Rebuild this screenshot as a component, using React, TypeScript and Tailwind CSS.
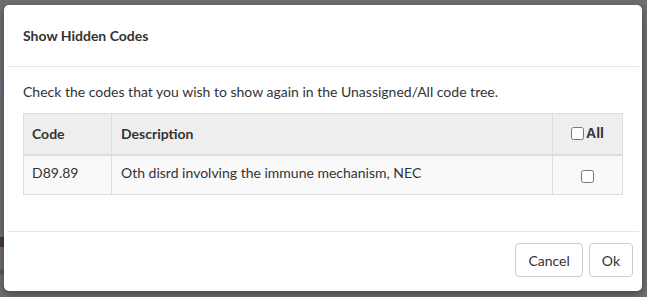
const FONT = { fontFamily: "Lato, 'Open Sans', sans-serif" };

const ROWS = [
  { code: "D89.89", description: "Oth disrd involving the immune mechanism, NEC" },
];

export default function App() {
  return (
    <div className="w-[647px] h-[297px] bg-[#6f6f6f] pt-[5px] flex overflow-hidden" style={FONT}>
      {/* page behind the overlay, barely visible at the left edge */}
      <div className="w-[4px] flex flex-col">
        <div className="h-[22px] mt-[75px] bg-[#6a7078]" />
        <div className="h-[10px] mt-[135px] bg-[#4a3a30]" />
        <div className="h-[6px] mt-[22px] bg-[#585e66]" />
      </div>
      <div className="w-[638px] h-[286px] bg-white rounded-[5px] shadow-[0_3px_9px_rgba(0,0,0,0.4)] flex flex-col text-[#333]">
        {/* header */}
        <div className="mx-[3px] px-[16px] h-[62px] border-b border-[#e5e5e5] flex items-center">
          <h4 className="text-[14px] font-bold leading-none">Show Hidden Codes</h4>
        </div>

        {/* body */}
        <div className="px-[19px] pt-[15px] flex-1">
          <p className="text-[14px] leading-[20px] mb-[11px]">
            Check the codes that you wish to show again in the Unassigned/All code tree.
          </p>
          <table className="w-[600px] border-collapse text-[14px] table-fixed">
            <thead>
              <tr className="bg-[#eeeeee] h-[41px]">
                <th className="w-[88px] text-left font-bold px-[8px] border border-[#dddddd] border-b-2">Code</th>
                <th className="text-left font-bold px-[9px] border border-[#dddddd] border-b-2">Description</th>
                <th className="w-[70px] font-bold border border-[#dddddd] border-b-2">
                  <span className="inline-flex items-center" style={{ fontFamily: "'Liberation Sans', Arial, sans-serif" }}>
                    <input type="checkbox" className="w-[13px] h-[13px] m-0 mr-[2px]" />
                    All
                  </span>
                </th>
              </tr>
            </thead>
            <tbody>
              {ROWS.map((r) => (
                <tr key={r.code} className="bg-[#f9f9f9] h-[40px]">
                  <td className="px-[8px] border border-[#dddddd] pb-[4px]">{r.code}</td>
                  <td className="px-[9px] border border-[#dddddd] pb-[4px]">{r.description}</td>
                  <td className="border border-[#dddddd] text-center">
                    <input type="checkbox" className="w-[13px] h-[13px] m-0 align-middle" />
                  </td>
                </tr>
              ))}
            </tbody>
          </table>
        </div>

        {/* footer */}
        <div className="mx-[3px] px-[6px] pt-[11px] pb-[14px] border-t border-[#e5e5e5] flex justify-end gap-[6px]">
          <button className="h-[34px] px-[12px] text-[14px] border border-[#cccccc] rounded-[4px] bg-white">Cancel</button>
          <button className="h-[34px] px-[12px] text-[14px] border border-[#cccccc] rounded-[4px] bg-white">Ok</button>
        </div>
      </div>
    </div>
  );
}
